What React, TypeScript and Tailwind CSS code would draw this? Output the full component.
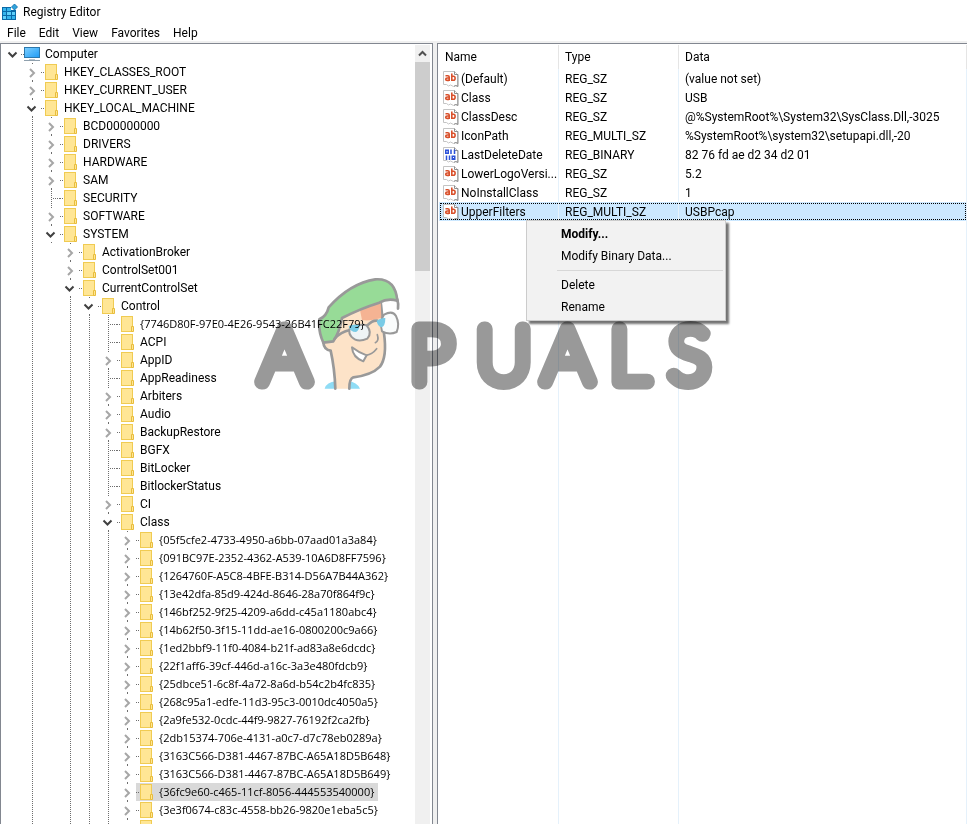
import { useState } from "react"
import clsx from "clsx"

type RegNode = {
  name: string
  // undefined means the key has no subkeys at all
  children?: RegNode[]
  open?: boolean
  // last key of its branch, so no guide line runs on below it
  last?: boolean
}

const leaf = (name: string): RegNode => ({ name })
const closed = (name: string): RegNode => ({ name, children: [] })

const classKeys = [
  "{05f5cfe2-4733-4950-a6bb-07aad01a3a84}",
  "{091BC97E-2352-4362-A539-10A6D8FF7596}",
  "{1264760F-A5C8-4BFE-B314-D56A7B44A362}",
  "{13e42dfa-85d9-424d-8646-28a70f864f9c}",
  "{146bf252-9f25-4209-a6dd-c45a1180abc4}",
  "{14b62f50-3f15-11dd-ae16-0800200c9a66}",
  "{1ed2bbf9-11f0-4084-b21f-ad83a8e6dcdc}",
  "{22f1aff6-39cf-446d-a16c-3a3e480fdcb9}",
  "{25dbce51-6c8f-4a72-8a6d-b54c2b4fc835}",
  "{268c95a1-edfe-11d3-95c3-0010dc4050a5}",
  "{2a9fe532-0cdc-44f9-9827-76192f2ca2fb}",
  "{2db15374-706e-4131-a0c7-d7c78eb0289a}",
  "{3163C566-D381-4467-87BC-A65A18D5B648}",
  "{3163C566-D381-4467-87BC-A65A18D5B649}",
  "{36fc9e60-c465-11cf-8056-444553540000}",
  "{3e3f0674-c83c-4558-bb26-9820e1eba5c5}",
  "{3f966bd9-fa04-4ec5-991c-d326973b5128}",
]

const registry: RegNode[] = [
  closed("HKEY_CLASSES_ROOT"),
  closed("HKEY_CURRENT_USER"),
  {
    name: "HKEY_LOCAL_MACHINE",
    open: true,
    children: [
      closed("BCD00000000"),
      closed("DRIVERS"),
      closed("HARDWARE"),
      closed("SAM"),
      leaf("SECURITY"),
      closed("SOFTWARE"),
      {
        name: "SYSTEM",
        open: true,
        last: true,
        children: [
          closed("ActivationBroker"),
          closed("ControlSet001"),
          {
            name: "CurrentControlSet",
            open: true,
            children: [
              {
                name: "Control",
                open: true,
                children: [
                  leaf("{7746D80F-97E0-4E26-9543-26B41FC22F79}"),
                  leaf("ACPI"),
                  closed("AppID"),
                  leaf("AppReadiness"),
                  closed("Arbiters"),
                  closed("Audio"),
                  closed("BackupRestore"),
                  leaf("BGFX"),
                  leaf("BitLocker"),
                  leaf("BitlockerStatus"),
                  closed("CI"),
                  { name: "Class", open: true, children: classKeys.map(closed) },
                ],
              },
            ],
          },
        ],
      },
    ],
  },
]

const values = [
  { name: "(Default)", type: "REG_SZ", data: "(value not set)" },
  { name: "Class", type: "REG_SZ", data: "USB" },
  { name: "ClassDesc", type: "REG_SZ", data: "@%SystemRoot%\\System32\\SysClass.Dll,-3025" },
  { name: "IconPath", type: "REG_MULTI_SZ", data: "%SystemRoot%\\system32\\setupapi.dll,-20" },
  { name: "LastDeleteDate", type: "REG_BINARY", data: "82 76 fd ae d2 34 d2 01" },
  { name: "LowerLogoVersi...", type: "REG_SZ", data: "5.2" },
  { name: "NoInstallClass", type: "REG_SZ", data: "1" },
  { name: "UpperFilters", type: "REG_MULTI_SZ", data: "USBPcap" },
]

function AppIcon() {
  return (
    <svg width="16" height="16" viewBox="0 0 16 16" aria-hidden="true">
      <path d="M0 3h9v3h5v10H0z" fill="#0a6aa8" />
      <path d="M1 4h3v3H1zM5 4h4v3H5zM1 8h3v3H1zM10 12h3v3h-3zM5 12h4v3H5z" fill="#35b4ec" />
      <path d="M5 8h4v3H5zM10 8h3v3h-3zM1 12h3v3H1z" fill="#5fd0fa" />
      <path d="M12.500 0l3 3-3 3-3-3z" fill="#2fa3dc" stroke="#0a6aa8" strokeWidth="0.800" />
    </svg>
  )
}

function ComputerIcon() {
  return (
    <svg width="17" height="16" viewBox="0 0 17 16" className="block" aria-hidden="true">
      <defs>
        <linearGradient id="screen" x1="0" y1="0" x2="1" y2="1">
          <stop offset="0" stopColor="#7fd0ff" />
          <stop offset="1" stopColor="#1e9bf5" />
        </linearGradient>
      </defs>
      <rect x="0.500" y="1.500" width="15" height="10" fill="url(#screen)" stroke="#2b78ad" />
      <path d="M5 13h6v1H5z" fill="#b9c4cc" />
      <path d="M0 14.500h16" stroke="#8fa0ad" />
    </svg>
  )
}

function FolderIcon() {
  return (
    <svg width="13" height="16" viewBox="0 0 13 16" className="block shrink-0" aria-hidden="true">
      <rect x="0.500" y="0.500" width="11" height="15" fill="#ffe695" stroke="#f0cb52" />
      <path d="M10.500 10.500h2v5h-2z" fill="#ffe695" stroke="#e8bd3c" />
    </svg>
  )
}

function ValueIcon({ binary }: { binary?: boolean }) {
  return (
    <svg width="16" height="16" viewBox="0 0 16 16" className="block shrink-0" aria-hidden="true">
      <path d="M.5.5h11l3 3v12l-2-1-2 1-3-1.500-2 1-2-1.500H.5z" fill="#fff" stroke="#c4c4c4" />
      <path d="M11.500.5v3h3.500v12l-2-1-2 .8" fill="none" stroke="#8f8f8f" />
      {binary ? (
        <g fill="none" stroke="#2b50d8" strokeWidth="1.500">
          <rect x="2.750" y="3.250" width="2.500" height="3" />
          <path d="M8 2.500V7M11.500 2.500V7M3.500 8.500V13M6.500 8.500V13" />
          <rect x="9.250" y="9.250" width="2.500" height="3" />
        </g>
      ) : (
        <g fill="none" stroke="#d9502b" strokeWidth="1.600">
          <path d="M2.500 4.800h2.300q1.400 0 1.400 1.300v4M6 7H4.200q-1.500 0-1.500 1.200t1.400 1.200H6" />
          <path d="M8.800 2.500v7.500M8.500 5.300h2q1.600 0 1.600 2t-1.600 2h-2" />
        </g>
      )}
    </svg>
  )
}

// Dotted line that carries an open ancestor branch past this row
function Guide({ visible }: { visible: boolean }) {
  return (
    <svg width="19" height="18" className="block shrink-0" aria-hidden="true">
      {visible && <path d="M9.500 0v18" stroke="#6e6e6e" strokeDasharray="1 1" />}
    </svg>
  )
}

function Chevron({ open }: { open?: boolean }) {
  return open ? (
    <path d="M4.500 7.500l4 4 4-4" fill="none" stroke="#404040" strokeWidth="2" />
  ) : (
    <path d="M7 6l4 4-4 4" fill="none" stroke="#a6a6a6" strokeWidth="2" />
  )
}

type TreeRowProps = {
  node: RegNode
  guides: boolean[]
  selected: string
  onSelect: (name: string) => void
}

function TreeRow({ node, guides, selected, onSelect }: TreeRowProps) {
  const [open, setOpen] = useState(!!node.open)
  const expandable = node.children !== undefined
  const isGuid = node.name.startsWith("{")

  return (
    <li role="treeitem" aria-expanded={expandable ? open : undefined} aria-selected={selected === node.name}>
      <div className="flex h-[18px]">
        {guides.map((visible, i) => (
          <Guide key={i} visible={visible} />
        ))}
        {expandable ? (
          <button aria-label={`Toggle ${node.name}`} onClick={() => setOpen(!open)} className="shrink-0">
            <svg width="18" height="18" className="block">
              <path d="M9.500 0v1M9.500 17v1" stroke="#6e6e6e" />
              <Chevron open={open} />
            </svg>
          </button>
        ) : (
          <svg width="18" height="18" className="block shrink-0" aria-hidden="true">
            <path d="M9.500 0v18M11 9.500h7" stroke="#6e6e6e" strokeDasharray="1 1" />
          </svg>
        )}
        <button
          onClick={() => onSelect(node.name)}
          className={clsx("flex items-center whitespace-nowrap pr-1", selected === node.name && "bg-[#d9d9d9]")}
        >
          <svg width="4" height="18" className="block shrink-0" aria-hidden="true">
            <path d="M0 9.500h3" stroke="#6e6e6e" strokeDasharray="1 1" />
          </svg>
          <FolderIcon />
          <span className={clsx("ml-1.5", isGuid && "font-['Open_Sans',sans-serif] text-[11px]")}>{node.name}</span>
        </button>
      </div>
      {open && node.children && (
        <ul role="group">
          {node.children.map((child) => (
            <TreeRow
              key={child.name}
              node={child}
              guides={[...guides, !node.last]}
              selected={selected}
              onSelect={onSelect}
            />
          ))}
        </ul>
      )}
    </li>
  )
}

function KeyTree() {
  const [selected, setSelected] = useState("{36fc9e60-c465-11cf-8056-444553540000}")

  return (
    <nav aria-label="Registry keys" className="flex w-[433px] shrink-0 border border-b-0 border-[#828790] bg-white pr-[2px]">
      <div className="min-w-0 flex-1 overflow-hidden pl-[3px] pt-px">
        <ul role="tree">
          <li role="treeitem" aria-expanded="true">
            <div className="flex h-[18px] items-center">
              <svg width="20" height="18" className="block shrink-0" aria-hidden="true">
                <Chevron open />
                <path d="M17 9.500h3" stroke="#6e6e6e" strokeDasharray="1 1" />
              </svg>
              <ComputerIcon />
              <span className="ml-1">Computer</span>
            </div>
            <ul role="group">
              {registry.map((node) => (
                <TreeRow key={node.name} node={node} guides={[false]} selected={selected} onSelect={setSelected} />
              ))}
            </ul>
          </li>
        </ul>
      </div>
      {/* Scrollbar */}
      <div className="mt-px w-[15px] shrink-0 bg-[#f0f0f0]">
        <button aria-label="Scroll up" className="flex h-[17px] w-full items-center justify-center">
          <svg width="9" height="7" viewBox="0 0 9 7" aria-hidden="true">
            <path d="M1 5.500L4.500 2 8 5.500" fill="none" stroke="#505050" strokeWidth="2" />
          </svg>
        </button>
        <div className="h-[209px] bg-[#cdcdcd]" />
      </div>
    </nav>
  )
}

function MenuItem({ children, bold }: { children: string; bold?: boolean }) {
  return (
    <button role="menuitem" className={clsx("block h-[22px] w-full pl-8 text-left hover:bg-[#91c9f7]", bold && "font-bold")}>
      {children}
    </button>
  )
}

function ContextMenu() {
  return (
    <div
      role="menu"
      className="absolute left-[88px] top-[176px] w-[200px] border border-[#cccccc] bg-[#f2f2f2] p-0.5 shadow-[3px_3px_2px_rgba(0,0,0,0.55)]"
    >
      <MenuItem bold>Modify...</MenuItem>
      <MenuItem>Modify Binary Data...</MenuItem>
      <div role="separator" className="my-[3px] ml-7 h-px bg-[#d7d7d7]" />
      <MenuItem>Delete</MenuItem>
      <MenuItem>Rename</MenuItem>
    </div>
  )
}

function ValueList() {
  return (
    <main className="relative flex min-w-0 flex-1 flex-col border-l border-t border-[#828790] bg-white pl-px pt-px">
      <table className="w-full table-fixed border-separate border-spacing-0 text-left">
        <colgroup>
          <col className="w-[120px]" />
          <col className="w-[120px]" />
          <col />
        </colgroup>
        <thead>
          <tr className="h-6">
            <th className="border-r border-[#e5e5e5] pl-1.5 font-normal">Name</th>
            <th className="border-r border-[#e5e5e5] pl-1.5 font-normal">Type</th>
            <th className="border-r border-[#e5e5e5] pl-1.5 font-normal">Data</th>
          </tr>
        </thead>
        <tbody>
          {values.map((v) => (
            <tr
              key={v.name}
              className={clsx(
                "h-[19px] whitespace-nowrap",
                v.name === "UpperFilters" && "bg-[#cce8ff] outline-1 -outline-offset-2 outline-dotted outline-black",
              )}
            >
              <td className="border-r border-[#e5f1fb] pl-1">
                <div className="flex items-center gap-0.5">
                  <ValueIcon binary={v.type === "REG_BINARY"} />
                  {v.name}
                </div>
              </td>
              <td className="border-r border-[#e5f1fb] pl-1.5">{v.type}</td>
              <td className="border-r border-[#e5f1fb] pl-1.5">{v.data}</td>
            </tr>
          ))}
        </tbody>
      </table>
      {/* Column lines below the last value */}
      <div className="grid flex-1 grid-cols-[120px_120px_1fr]">
        <div className="border-r border-[#e5f1fb]" />
        <div className="border-r border-[#e5f1fb]" />
        <div className="border-r border-[#e5f1fb]" />
      </div>
      <ContextMenu />
    </main>
  )
}

function Watermark() {
  return (
    <svg
      width="480"
      height="130"
      viewBox="250 270 480 130"
      className="pointer-events-none absolute left-[250px] top-[270px] mix-blend-multiply"
      aria-hidden="true"
    >
      <g
        fill="#999"
        stroke="#999"
        strokeWidth="15"
        strokeLinejoin="round"
        fontSize="77"
        className="font-['Lato',sans-serif] font-thin"
      >
        <text x="260 410 476 543 610 669" y="382">
          APUALS
        </text>
      </g>
      <g transform="translate(310 270) scale(.3333)" stroke="#999" strokeWidth="8" strokeLinejoin="round" strokeLinecap="round">
        {/* Collar */}
        <path d="M44 356q6-20 34-22v22zM116 356v-22q24 2 34 22z" fill="#8fdcf5" stroke="none" />
        {/* Face and neck */}
        <path
          d="M76 356q-2-60-14-114-20-2-22-24l56-80 116-44 10 96q10 70-12 100-26 26-80 32-12 4-12 34"
          fill="#fde3c8"
        />
        <path d="M150 120q36-10 62-26l2 50q-34 10-58 6z" fill="#f5b393" stroke="none" />
        {/* Cap */}
        <path
          d="M28 148q22-10 28-36Q120 40 196 28q60-4 66 64-30-8-54 6-58 18-112 46-8 44-26 70l-30 4q-16-36-12-70z"
          fill="#97db97"
        />
        <path d="M262 88q4 14 2 28M74 206q18-20 46-26" fill="none" />
        <path d="M218 100q22-6 38 4l-4 18q-16-6-28 8z" fill="#fff" stroke="none" />
        {/* Glasses */}
        <path d="M118 178q26-18 52-12 18 22 2 40-30 14-48-6-8-10-6-22z" fill="#eef4f6" strokeWidth="6" />
        <path d="M222 134q26-14 36 4 12 24 2 48-22 10-44-2-8-30 6-50z" fill="#fafcfc" strokeWidth="6" />
        <path d="M172 166q16-16 30-14" fill="none" />
        <path d="M116 168q18-8 32-2 0 16-10 20-18 0-22-18zM200 152q14-10 26-8 0 26-12 28-12-4-14-20z" fill="#79cbe6" stroke="none" />
        {/* Nose and mouth */}
        <path d="M202 194q6 18-6 24M168 256q20-4 32-20" fill="none" strokeWidth="5" />
        <path d="M126 232q2 30 34 42l10-18q-24-8-44-24z" fill="#fff" strokeWidth="6" />
      </g>
    </svg>
  )
}

export default function App() {
  return (
    <div className="relative flex h-screen flex-col overflow-hidden bg-white font-['Roboto',sans-serif] text-[12px] leading-4 text-black">
      {/* Title bar */}
      <header className="flex h-6 shrink-0 items-center gap-1 pl-0.5">
        <AppIcon />
        <h1 className="ml-px">Registry Editor</h1>
      </header>

      {/* Menu bar */}
      <div role="menubar" className="flex h-[17px] shrink-0 items-center gap-[13px] pl-[7px]">
        {["File", "Edit", "View", "Favorites", "Help"].map((item) => (
          <button key={item} role="menuitem">
            {item}
          </button>
        ))}
      </div>

      <div className="flex min-h-0 flex-1 gap-1 bg-[#f0f0f0] pt-0.5">
        <KeyTree />
        <ValueList />
      </div>

      <Watermark />
    </div>
  )
}
